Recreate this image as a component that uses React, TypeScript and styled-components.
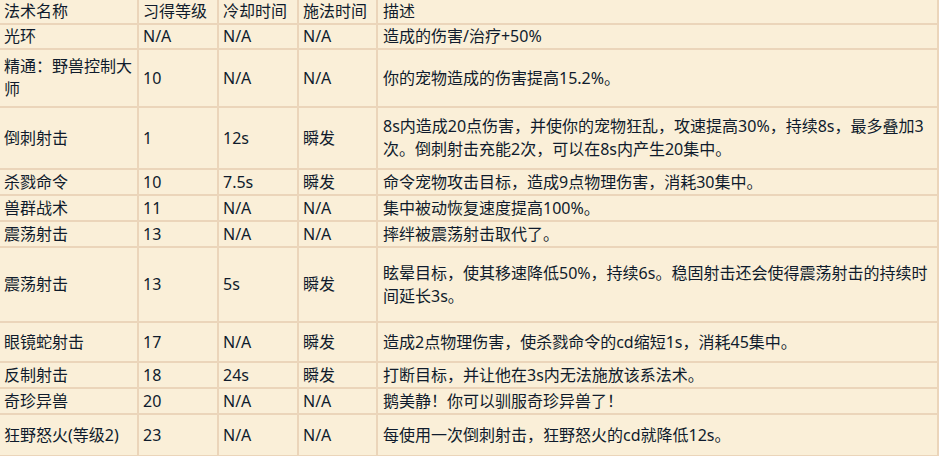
import { Fragment } from 'react';
import styled, { createGlobalStyle } from 'styled-components';

type Skill = {
  name: string[];
  level: string;
  cooldown: string;
  cast: string;
  desc: string[];
  h: number;
};

const skills: Skill[] = [
  { name: ['光环'], level: 'N/A', cooldown: 'N/A', cast: 'N/A', desc: ['造成的伤害/治疗+50%'], h: 25 },
  { name: ['精通：野兽控制大', '师'], level: '10', cooldown: 'N/A', cast: 'N/A', desc: ['你的宠物造成的伤害提高15.2%。'], h: 58 },
  {
    name: ['倒刺射击'],
    level: '1',
    cooldown: '12s',
    cast: '瞬发',
    desc: ['8s内造成20点伤害，并使你的宠物狂乱，攻速提高30%，持续8s，最多叠加3', '次。倒刺射击充能2次，可以在8s内产生20集中。'],
    h: 62,
  },
  { name: ['杀戮命令'], level: '10', cooldown: '7.5s', cast: '瞬发', desc: ['命令宠物攻击目标，造成9点物理伤害，消耗30集中。'], h: 26 },
  { name: ['兽群战术'], level: '11', cooldown: 'N/A', cast: 'N/A', desc: ['集中被动恢复速度提高100%。'], h: 26 },
  { name: ['震荡射击'], level: '13', cooldown: 'N/A', cast: 'N/A', desc: ['摔绊被震荡射击取代了。'], h: 26 },
  {
    name: ['震荡射击'],
    level: '13',
    cooldown: '5s',
    cast: '瞬发',
    desc: ['眩晕目标，使其移速降低50%，持续6s。稳固射击还会使得震荡射击的持续时', '间延长3s。'],
    h: 75,
  },
  { name: ['眼镜蛇射击'], level: '17', cooldown: 'N/A', cast: '瞬发', desc: ['造成2点物理伤害，使杀戮命令的cd缩短1s，消耗45集中。'], h: 40 },
  { name: ['反制射击'], level: '18', cooldown: '24s', cast: '瞬发', desc: ['打断目标，并让他在3s内无法施放该系法术。'], h: 26 },
  { name: ['奇珍异兽'], level: '20', cooldown: 'N/A', cast: 'N/A', desc: ['鹅美静！你可以驯服奇珍异兽了！'], h: 26 },
  { name: ['狂野怒火(等级2)'], level: '23', cooldown: 'N/A', cast: 'N/A', desc: ['每使用一次倒刺射击，狂野怒火的cd就降低12s。'], h: 42 },
];

const Lines = ({ lines }: { lines: string[] }) => (
  <>
    {lines.map((l, i) => (
      <Fragment key={i}>
        {i > 0 && <br />}
        {l}
      </Fragment>
    ))}
  </>
);

const App = () => {
  return (
    <>
      <GlobalStyle />
      <Table>
        <colgroup>
          <col style={{ width: 139 }} />
          <col style={{ width: 80 }} />
          <col style={{ width: 80 }} />
          <col style={{ width: 79 }} />
          <col style={{ width: 561 }} />
        </colgroup>
        <thead>
          <Row $h={25}>
            <Head>法术名称</Head>
            <Head>习得等级</Head>
            <Head>冷却时间</Head>
            <Head>施法时间</Head>
            <Head>描述</Head>
          </Row>
        </thead>
        <tbody>
          {skills.map((s, i) => (
            <Row key={i} $h={s.h}>
              <Cell>
                <Lines lines={s.name} />
              </Cell>
              <Cell>{s.level}</Cell>
              <Cell>{s.cooldown}</Cell>
              <Cell>{s.cast}</Cell>
              <Cell $wide>
                <Lines lines={s.desc} />
              </Cell>
            </Row>
          ))}
        </tbody>
      </Table>
    </>
  );
};

const GlobalStyle = createGlobalStyle`
  html, body {
    margin: 0;
    padding: 0;
    background: #ffffff;
  }
  body {
    font-family: 'Noto Sans', 'Noto Sans CJK SC', sans-serif;
  }
`;

const Table = styled.table`
  width: 939px;
  table-layout: fixed;
  border-collapse: separate;
  border-spacing: 0;
  background-color: #faefd8;
  color: #0f1b2c;
  font-size: 16px;
  line-height: 23px;
`;

const Row = styled.tr<{ $h: number }>`
  height: ${({ $h }) => $h}px;
`;

const Head = styled.th`
  box-sizing: border-box;
  padding: 0 4px;
  text-align: left;
  font-weight: normal;
  vertical-align: middle;
  white-space: nowrap;
  border-right: 2px solid #ebd5ba;
  border-bottom: 2px solid #ebd5ba;
  &:last-child {
    padding-left: 5px;
  }
`;

const Cell = styled.td<{ $wide?: boolean }>`
  box-sizing: border-box;
  padding: 0 4px 0 ${({ $wide }) => ($wide ? 5 : 4)}px;
  vertical-align: middle;
  white-space: nowrap;
  overflow: hidden;
  border-right: 2px solid #ebd5ba;
  border-bottom: 2px solid #ebd5ba;
`;

export default App;
